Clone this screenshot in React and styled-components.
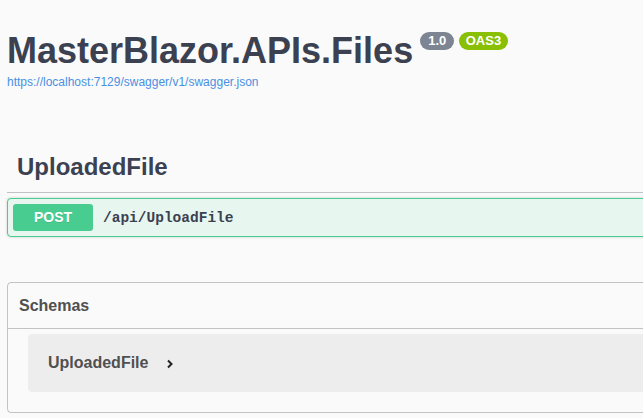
import React from 'react'
import styled, { createGlobalStyle } from 'styled-components'

const GlobalStyle = createGlobalStyle`
  html, body {
    margin: 0;
    padding: 0;
    background: #fafafa;
    overflow: hidden;
  }
  body {
    font-family: "Liberation Sans", Arial, sans-serif;
    color: #3b4151;
  }
`

const Page = styled.div`
  width: 760px;
  padding: 0 0 0 7px;
`

const Info = styled.div`
  padding-top: 28px;
  margin-bottom: 53px;
`

const Title = styled.h2`
  margin: 0;
  display: flex;
  align-items: flex-start;
  font-size: 36px;
  font-weight: 700;
  line-height: 45px;
  color: #3b4151;
`

const Badge = styled.small`
  display: inline-block;
  margin: 4px 0 0 ${p => (p.$first ? 7 : 5)}px;
  padding: 0 ${p => (p.$first ? 8 : 6.5)}px;
  height: 18px;
  line-height: 18px;
  border-radius: 57px;
  background: ${p => p.$bg};
  color: #fff;
  font-size: 13px;
  font-weight: 700;
`

const SpecLink = styled.a`
  display: block;
  margin-top: 2px;
  font-size: 12px;
  line-height: 14px;
  color: #4990e2;
  text-decoration: none;
`

const Tag = styled.h3`
  margin: 0 0 5px 0;
  padding: 10px;
  border-bottom: 1px solid rgba(59, 65, 81, 0.3);
  font-size: 24px;
  font-weight: 700;
  line-height: 30px;
  color: #3b4151;
`

const Operation = styled.div`
  display: flex;
  align-items: center;
  gap: 10px;
  padding: 5px;
  border: 1px solid #49cc90;
  border-radius: 4px;
  background: #e8f6f0;
  box-shadow: 0 0 3px rgba(0, 0, 0, 0.19);
`

const Method = styled.span`
  width: 80px;
  height: 27px;
  line-height: 27px;
  text-align: center;
  border-radius: 3px;
  background: #49cc90;
  color: #fff;
  font-size: 14px;
  font-weight: 700;
  text-shadow: 0 1px 0 rgba(0, 0, 0, 0.1);
`

const Path = styled.span`
  font-family: "Liberation Mono", "DejaVu Sans Mono", monospace;
  font-size: 14.5px;
  font-weight: 700;
  color: #3b4151;
`

const Models = styled.section`
  margin-top: 45px;
  border: 1px solid rgba(59, 65, 81, 0.3);
  border-radius: 4px;
`

const ModelsHeader = styled.h4`
  margin: 0;
  padding: 0 11px;
  height: 45px;
  display: flex;
  align-items: center;
  border-bottom: 1px solid rgba(59, 65, 81, 0.3);
  font-size: 16px;
  font-weight: 700;
  color: #505050;
`

const ModelsBody = styled.div`
  padding: 5px 0 20px 20px;
`

const ModelContainer = styled.div`
  display: flex;
  align-items: center;
  height: 58px;
  padding-left: 20px;
  border-radius: 4px;
  background: rgba(0, 0, 0, 0.05);
`

const ModelTitle = styled.span`
  font-size: 16px;
  font-weight: 700;
  color: #505050;
`

const Chevron = styled.svg`
  margin-left: 18px;
  margin-top: 2px;
`

export default function App() {
  return (
    <>
      <GlobalStyle />
      <Page>
        <Info>
          <Title>
            MasterBlazor.APIs.Files
            <Badge $first $bg="#7d8492">1.0</Badge>
            <Badge $bg="#89bf04">OAS3</Badge>
          </Title>
          <SpecLink href="#">https://localhost:7129/swagger/v1/swagger.json</SpecLink>
        </Info>

        <Tag>UploadedFile</Tag>
        <Operation>
          <Method>POST</Method>
          <Path>/api/UploadFile</Path>
        </Operation>

        <Models>
          <ModelsHeader>Schemas</ModelsHeader>
          <ModelsBody>
            <ModelContainer>
              <ModelTitle>UploadedFile</ModelTitle>
              <Chevron width="8" height="10" viewBox="0 0 8 10">
                <path d="M2 1.5 L5.5 5 L2 8.5" fill="none" stroke="#222" strokeWidth="2" />
              </Chevron>
            </ModelContainer>
          </ModelsBody>
        </Models>
      </Page>
    </>
  )
}
